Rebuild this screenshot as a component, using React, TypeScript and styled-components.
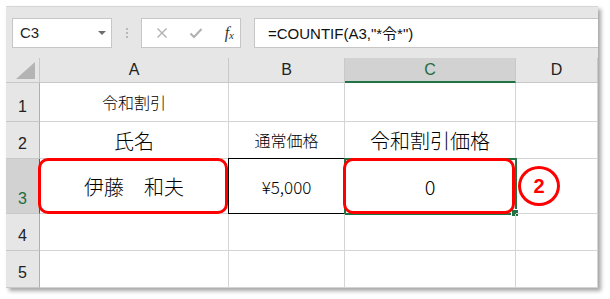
import styled, { createGlobalStyle } from "styled-components";

const GlobalStyle = createGlobalStyle`
  html, body {
    margin: 0;
    padding: 0;
    background: #ffffff;
  }
`;

const COLS = [34, 189, 116, 171, 82];
const ROWS = [25, 39, 37, 55, 37, 37];

function App() {
  return (
    <>
      <GlobalStyle />
      <Styled.Page>
        <Styled.Frame>
          <Styled.Toolbar>
            <Styled.NameBox>
              <span>C3</span>
              <Styled.Caret />
            </Styled.NameBox>
            <Styled.Dots>
              <i />
              <i />
              <i />
            </Styled.Dots>
            <Styled.FuncBox>
              <svg width="12" height="12" viewBox="0 0 12 12">
                <path d="M1.5 1.5 L10.5 10.5 M10.5 1.5 L1.5 10.5" stroke="#b0b0b0" strokeWidth="1.4" fill="none" />
              </svg>
              <svg width="14" height="12" viewBox="0 0 14 12">
                <path d="M1.5 6.5 L5 10 L12.5 2" stroke="#b0b0b0" strokeWidth="2" fill="none" />
              </svg>
              <Styled.Fx>
                f<sub>x</sub>
              </Styled.Fx>
            </Styled.FuncBox>
            <Styled.FormulaInput>=COUNTIF(A3,"*令*")</Styled.FormulaInput>
          </Styled.Toolbar>

          <Styled.Grid>
            <Styled.Corner>
              <Styled.Triangle />
            </Styled.Corner>
            <Styled.ColHead>A</Styled.ColHead>
            <Styled.ColHead>B</Styled.ColHead>
            <Styled.ColHead $active>C</Styled.ColHead>
            <Styled.ColHead>D</Styled.ColHead>

            <Styled.RowHead>1</Styled.RowHead>
            <Styled.Cell $size={16}>令和割引</Styled.Cell>
            <Styled.Cell />
            <Styled.Cell />
            <Styled.Cell />

            <Styled.RowHead>2</Styled.RowHead>
            <Styled.Cell $size={20}>氏名</Styled.Cell>
            <Styled.Cell $size={16}>通常価格</Styled.Cell>
            <Styled.Cell $size={20}>令和割引価格</Styled.Cell>
            <Styled.Cell />

            <Styled.RowHead $active>3</Styled.RowHead>
            <Styled.Cell $size={20}>
              伊藤　和夫
              <Styled.Highlight />
            </Styled.Cell>
            <Styled.Cell $size={17} $boxed>
              ¥5,000
            </Styled.Cell>
            <Styled.Cell $size={20} $selected>
              0
              <Styled.Handle />
              <Styled.Highlight />
            </Styled.Cell>
            <Styled.Cell $start>
              <Styled.Step>2</Styled.Step>
            </Styled.Cell>

            <Styled.RowHead>4</Styled.RowHead>
            <Styled.Cell />
            <Styled.Cell />
            <Styled.Cell />
            <Styled.Cell />

            <Styled.RowHead>5</Styled.RowHead>
            <Styled.Cell />
            <Styled.Cell />
            <Styled.Cell />
            <Styled.Cell />
          </Styled.Grid>
        </Styled.Frame>
      </Styled.Page>
    </>
  );
}

export default App;

const Styled = {
  Page: styled.div`
    padding: 6px 0 0 6px;
    width: 610px;
    height: 299px;
    box-sizing: border-box;
    font-family: "Noto Sans CJK JP", "Liberation Sans", sans-serif;
  `,

  Frame: styled.div`
    width: 592px;
    border-top: 1px solid #d6d6d6;
    background: #e6e6e6;
    box-shadow: 3px 3px 4px rgba(0, 0, 0, 0.35);
  `,

  Toolbar: styled.div`
    display: flex;
    align-items: center;
    height: 51px;
    padding: 0 0 0 6px;
  `,

  NameBox: styled.div`
    display: flex;
    align-items: center;
    justify-content: space-between;
    box-sizing: border-box;
    width: 100px;
    height: 30px;
    padding: 0 5px 0 7px;
    background: #ffffff;
    border: 1px solid #c6c6c6;
    font-family: "Liberation Sans", sans-serif;
    font-size: 15px;
    color: #222222;
  `,

  Caret: styled.span`
    width: 0;
    height: 0;
    border-left: 4px solid transparent;
    border-right: 4px solid transparent;
    border-top: 4px solid #6e6e6e;
  `,

  Dots: styled.div`
    display: flex;
    flex-direction: column;
    gap: 2px;
    margin: 0 13px 0 14px;

    i {
      width: 2px;
      height: 2px;
      background: #b8b8b8;
    }
  `,

  FuncBox: styled.div`
    display: flex;
    align-items: center;
    justify-content: space-between;
    box-sizing: border-box;
    width: 100px;
    height: 30px;
    padding: 0 6px 0 14px;
    background: #ffffff;
    border: 1px solid #c6c6c6;
  `,

  Fx: styled.span`
    font-family: "Liberation Serif", serif;
    font-style: italic;
    font-size: 16px;
    color: #333333;

    sub {
      font-size: 11px;
      vertical-align: -1px;
    }
  `,

  FormulaInput: styled.div`
    display: flex;
    align-items: center;
    box-sizing: border-box;
    flex: 1;
    height: 30px;
    margin-left: 13px;
    padding-left: 13px;
    background: #ffffff;
    border: 1px solid #c6c6c6;
    border-right: none;
    font-family: "Liberation Sans", "Noto Sans CJK JP", sans-serif;
    font-size: 15px;
    color: #111111;
  `,

  Grid: styled.div`
    display: grid;
    grid-template-columns: ${COLS.map((c) => `${c}px`).join(" ")};
    grid-template-rows: ${ROWS.map((r) => `${r}px`).join(" ")};
    background: #ffffff;
  `,

  Corner: styled.div`
    position: relative;
    background: #e6e6e6;
    border-right: 1px solid #c8c8c8;
    border-bottom: 1px solid #c8c8c8;
  `,

  Triangle: styled.div`
    position: absolute;
    right: 4px;
    bottom: 3px;
    width: 0;
    height: 0;
    border-left: 19px solid transparent;
    border-bottom: 17px solid #b4b4b4;
  `,

  ColHead: styled.div<{ $active?: boolean }>`
    display: flex;
    align-items: center;
    justify-content: center;
    background: ${(p) => (p.$active ? "#d2d2d2" : "#e6e6e6")};
    border-right: 1px solid #c8c8c8;
    border-bottom: ${(p) => (p.$active ? "2px solid #217346" : "1px solid #c8c8c8")};
    font-family: "Liberation Sans", sans-serif;
    font-size: 16px;
    color: ${(p) => (p.$active ? "#1e6b41" : "#222222")};
  `,

  RowHead: styled.div<{ $active?: boolean }>`
    display: flex;
    align-items: flex-end;
    justify-content: center;
    padding-bottom: 5px;
    box-sizing: border-box;
    background: ${(p) => (p.$active ? "#d2d2d2" : "#e6e6e6")};
    border-right: 1px solid ${(p) => (p.$active ? "#217346" : "#b0b0b0")};
    border-bottom: 1px solid #c8c8c8;
    font-family: "Liberation Sans", sans-serif;
    font-size: 16px;
    color: ${(p) => (p.$active ? "#1e6b41" : "#222222")};
  `,

  Cell: styled.div<{ $size?: number; $boxed?: boolean; $selected?: boolean; $start?: boolean }>`
    position: relative;
    display: flex;
    align-items: center;
    justify-content: ${(p) => (p.$start ? "flex-start" : "center")};
    box-sizing: border-box;
    border-right: 1px solid #d4d4d4;
    border-bottom: 1px solid #d4d4d4;
    font-size: ${(p) => p.$size ?? 16}px;
    font-weight: 300;
    color: #000000;
    ${(p) => p.$boxed && "border: 1px solid #000000; margin: -1px 0 0 -1px;"}
    ${(p) => p.$selected && "outline: 2px solid #217346; outline-offset: -1px;"}
  `,

  Highlight: styled.div`
    position: absolute;
    inset: -1px 0 -1px -2px;
    border: 3px solid #ff0000;
    border-radius: 10px;
    pointer-events: none;
  `,

  Handle: styled.div`
    position: absolute;
    right: -4px;
    bottom: -4px;
    width: 6px;
    height: 6px;
    background: #217346;
    border: 1px solid #ffffff;
  `,

  Step: styled.div`
    display: flex;
    align-items: center;
    justify-content: center;
    box-sizing: border-box;
    width: 42px;
    height: 40px;
    margin-left: 2px;
    border: 3px solid #ff0000;
    border-radius: 50%;
    font-family: "Liberation Sans", sans-serif;
    font-weight: 700;
    font-size: 20px;
    color: #ff0000;
  `,
};
